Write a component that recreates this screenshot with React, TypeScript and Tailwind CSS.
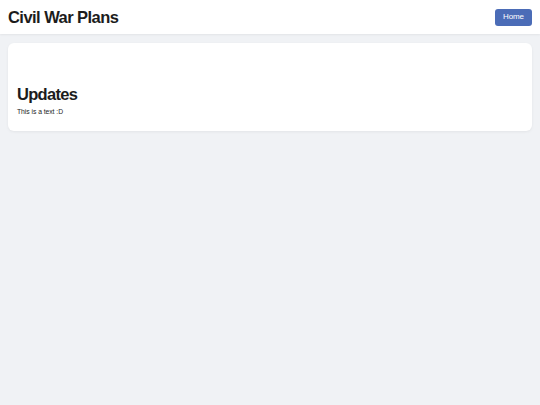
export default function App() {
  return (
    <div className="min-h-screen bg-[#f0f2f5] font-['Liberation_Sans',Arial,sans-serif] text-[#1c1c1c]">
      <header className="h-[34px] bg-white flex items-center justify-between px-2 shadow-[0_1px_2px_rgba(0,0,0,0.06)]">
        <h1 className="text-[16.5px] font-bold leading-none tracking-[-0.55px]">Civil War Plans</h1>
        <button className="h-[17px] w-[37px] rounded-[3px] bg-[#4b6cb7] text-white text-[8px] leading-none tracking-[-0.1px]">
          Home
        </button>
      </header>
      <main className="p-2 pt-[9px]">
        <section className="bg-white rounded-md shadow-[0_1px_3px_rgba(0,0,0,0.06)] px-[9px] pt-[43px] pb-[15px]">
          <h2 className="text-[16.5px] font-bold leading-none tracking-[-0.7px]">Updates</h2>
          <p className="text-[6.8px] mt-[6.5px] leading-none tracking-[-0.05px]">This is a text :D</p>
        </section>
      </main>
    </div>
  );
}
